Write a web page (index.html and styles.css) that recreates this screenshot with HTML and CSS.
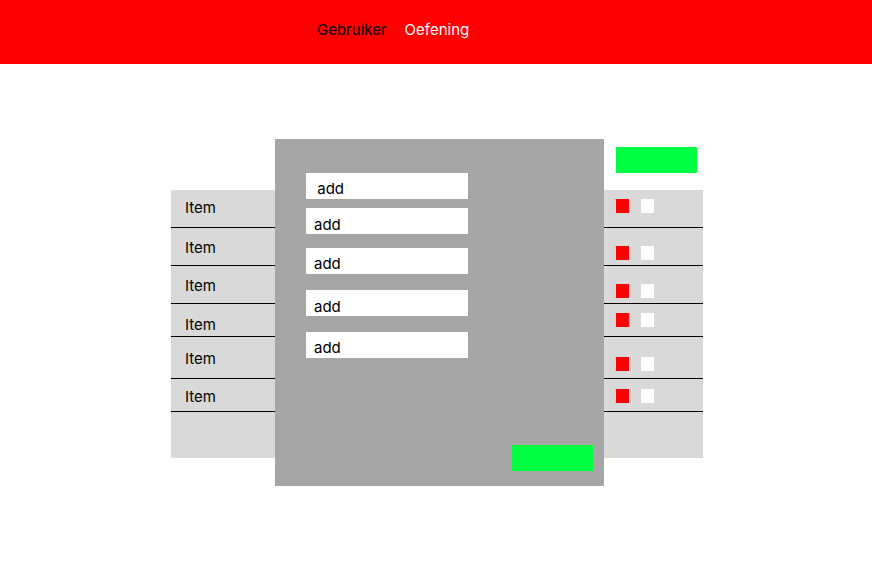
FILE: index.html
```html
<!DOCTYPE html>
<html>
<head>
<meta charset="utf-8">
<link rel="stylesheet" href="styles.css">
</head>
<body>
<header class="topbar">
  <nav class="nav">
    <span class="nav-link">Gebruiker</span>
    <span class="nav-link nav-link--active">Oefening</span>
  </nav>
</header>
<main class="workspace">
  <ul class="list list--items">
    <li class="row row--a pad-9">Item</li>
    <li class="row row--a pad-11">Item</li>
    <li class="row row--a pad-11">Item</li>
    <li class="row row--b pad-12">Item</li>
    <li class="row row--c pad-13">Item</li>
    <li class="row row--b pad-9">Item</li>
    <li class="row row--end"></li>
  </ul>
  <section class="panel">
    <div class="field field--first">&nbsp;add</div>
    <div class="field field--low gap-9">add</div>
    <div class="field gap-14">add</div>
    <div class="field field--low gap-16">add</div>
    <div class="field gap-16">add</div>
    <button class="btn btn--panel"></button>
  </section>
  <aside class="side">
    <button class="btn btn--side"></button>
    <ul class="list list--checks">
      <li class="row row--a sq-9"><span class="sq sq--red"></span><span class="sq sq--white"></span></li>
      <li class="row row--a sq-18"><span class="sq sq--red"></span><span class="sq sq--white"></span></li>
      <li class="row row--a sq-18"><span class="sq sq--red"></span><span class="sq sq--white"></span></li>
      <li class="row row--b sq-9"><span class="sq sq--red"></span><span class="sq sq--white"></span></li>
      <li class="row row--c sq-20"><span class="sq sq--red"></span><span class="sq sq--white"></span></li>
      <li class="row row--b sq-10"><span class="sq sq--red"></span><span class="sq sq--white"></span></li>
      <li class="row row--end"></li>
    </ul>
  </aside>
</main>
</body>
</html>
```
FILE: styles.css
```css
* { box-sizing: border-box; }
html, body { margin: 0; padding: 0; background: #fff; }
body {
  font-family: Inter, "Noto Sans", sans-serif;
  font-size: 15px;
  line-height: 18px;
  color: #000;
}
.topbar {
  height: 64px;
  background: #ff0000;
  padding: 21px 0 0 317px;
}
.nav { display: flex; gap: 18px; }
.nav-link { color: #000; }
.nav-link--active { color: #fff; }

.workspace {
  display: flex;
  align-items: flex-start;
  margin: 75px 0 0 171px;
}
.list {
  list-style: none;
  margin: 0;
  padding: 0;
  background: #d9d9d9;
}
.list--items { width: 104px; margin-top: 51px; }
.list--checks { width: 99px; margin-top: 17px; }
.row { border-bottom: 1px solid #000; }
.row--a { height: 38px; }
.row--b { height: 33px; }
.row--c { height: 42px; }
.row--end { height: 46px; border-bottom: 0; }
.list--items .row { padding-left: 14px; }
.pad-9 { padding-top: 9px; }
.pad-11 { padding-top: 11px; }
.pad-12 { padding-top: 12px; }
.pad-13 { padding-top: 13px; }

.list--checks .row { display: flex; align-items: flex-start; gap: 12px; padding-left: 12px; }
.sq-9 { padding-top: 9px; }
.sq-10 { padding-top: 10px; }
.sq-18 { padding-top: 18px; }
.sq-20 { padding-top: 20px; }
.sq { display: block; width: 13px; height: 14px; }
.sq--red { background: #ff0000; }
.sq--white { background: #fff; }

.panel {
  width: 329px;
  height: 347px;
  background: #a6a6a6;
  display: flex;
  flex-direction: column;
  align-items: flex-start;
  padding: 34px 0 15px 31px;
}
.field {
  width: 162px;
  height: 26px;
  background: #fff;
  padding: 7px 0 0 8px;
}
.field--first { padding-left: 7px; }
.field--low { padding-top: 8px; }
.gap-9 { margin-top: 9px; }
.gap-14 { margin-top: 14px; }
.gap-16 { margin-top: 16px; }

.btn {
  display: block;
  width: 81px;
  height: 26px;
  border: 0;
  padding: 0;
  background: #00ff41;
}
.btn--panel { margin-top: auto; align-self: flex-end; margin-right: 11px; }
.side { display: flex; flex-direction: column; }
.btn--side { margin: 8px 0 0 12px; }
```
